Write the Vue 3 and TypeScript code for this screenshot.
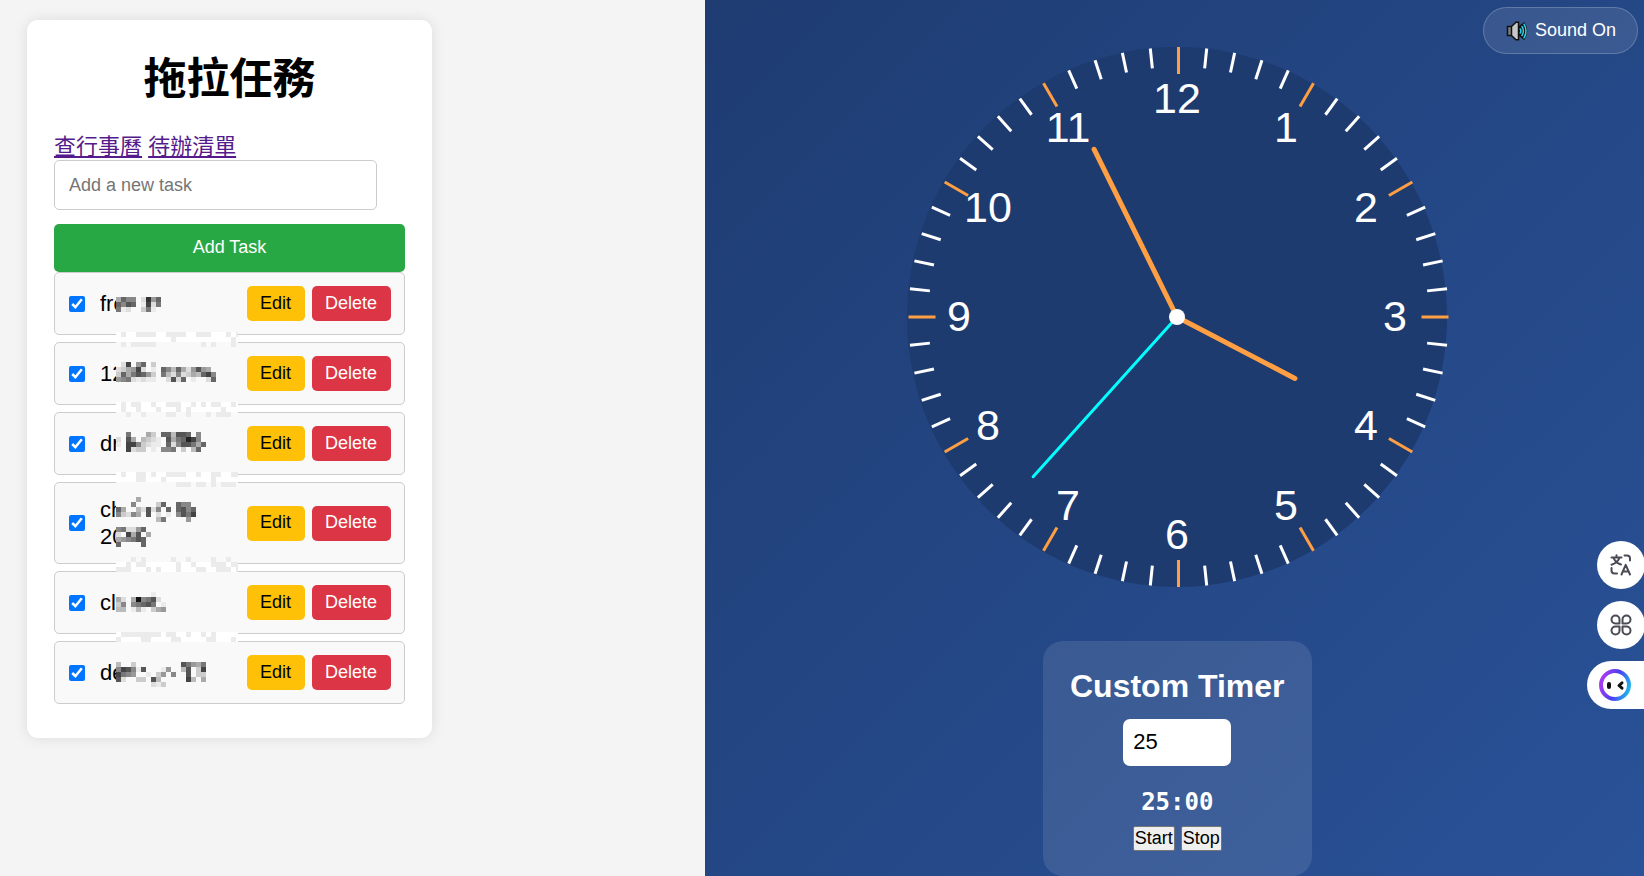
<script setup lang="ts">
import { computed, ref } from 'vue'

interface Task {
  id: number
  lines: string[]
  done: boolean
}

interface Cell {
  x: number
  y: number
  width: number
  fill: string
}

const tasks = ref<Task[]>([
  { id: 1, lines: ['fre'], done: true },
  { id: 2, lines: ['12'], done: true },
  { id: 3, lines: ['dr'], done: true },
  { id: 4, lines: ['ch', '20'], done: true },
  { id: 5, lines: ['cl'], done: true },
  { id: 6, lines: ['de'], done: true },
])
const newTask = ref('')

function addTask() {
  const text = newTask.value.trim()
  if (!text) return
  tasks.value.push({ id: Date.now(), lines: [text], done: false })
  newTask.value = ''
}

function editTask(task: Task) {
  newTask.value = task.lines.join(' ')
}

function removeTask(id: number) {
  tasks.value = tasks.value.filter((task) => task.id !== id)
}

// Pixelated privacy mask over the task names: one hex grey level per block,
// "." for the row colour, "w" for white.
const block = 5
const maskWidth = 122
const maskRows: Record<number, string> = {
  25: 'a688.d396................',
  30: '6856.e4d7................',
  35: '7ed..c7e.................',
  60: 'wewweeeewweeeewweeewwwewe',
  65: 'wwwwwwwwwwwewwwwwwwwwwwew',
  70: '.e.eeeee.........e.e...e.',
  90: '.d4.96.c.................',
  95: 'dca94d.e.68b6ad959a......',
  100: 'c6a7569c.7bd8dcab648.....',
  105: '987dedee..d5d6.e..d6.....',
  130: 'weweewwewweeewweweweewwew',
  135: 'wewwewwwewwwewewwwwwwewww',
  140: '..e..e....ee..e...e.eee..',
  160: '..7...ac.66b556.8........',
  165: 'd.5a.bcde.5a76248........',
  170: 'e.448cdee.6d8557a6.......',
  175: '..4dcc.e.887.c.b6........',
  200: 'wewweewewweeeewwewweewwee',
  205: 'wwwweewwwewwwwwwwwwewwwww',
  210: '............eee.ee.e.eee.',
  225: '....a....................',
  230: '...8....c6..688..........',
  235: '6a..bd5d8.6.6586.........',
  240: '8cd8a.5.d.e.8574.........',
  245: '........b7....9..........',
  255: '87dd96...................',
  260: 'd.4a5.a..................',
  265: 'a98756...................',
  270: '6....6...................',
  285: '...e.e.....e..e....e..e..',
  290: 'wweweewwwwwwewwewwweeewee',
  295: 'eeewwwewewwwewwweewweeewe',
  320: '.......e.................',
  325: 'ad.a1875d................',
  330: 'c8.87657.e...............',
  335: 'bb.ebe.ca9...............',
  360: 'weeeeeeeeweewwewwewewwwww',
  365: 'ewwwweewwwweewwwwweewwwew',
  390: 'b..c.........579a7.......',
  395: '8458e5...e9..b5.c4.......',
  400: '4789..e.c9.8..5.cc.......',
  405: '5d..cc.5b.....4b.a.......',
  410: '.......dec...............',
}

function shade(code: string): string {
  if (code === 'w') return '#ffffff'
  if (code === 'e') return '#ebebeb'
  if (code === '.') return '#f9f9f9'
  return '#' + code.repeat(3)
}

const maskCells = computed<Cell[]>(() =>
  Object.entries(maskRows).flatMap(([top, codes]) =>
    codes.split('').map((code, i) => ({
      x: i * block,
      y: Number(top),
      width: Math.min(block, maskWidth - i * block),
      fill: shade(code),
    })),
  ),
)

const soundOn = ref(true)

const time = { hours: 3, minutes: 55, seconds: 37 }
const hourAngle = computed(() => time.hours * 30 + time.minutes * 0.5)
const minuteAngle = computed(() => time.minutes * 6 + time.seconds * 0.1)
const secondAngle = computed(() => time.seconds * 6)

const ticks = Array.from({ length: 60 }, (_, i) => ({
  angle: i * 6,
  major: i % 5 === 0,
}))

const numerals = Array.from({ length: 12 }, (_, i) => {
  const value = i + 1
  const radians = (value * Math.PI) / 6
  return {
    value,
    x: Math.round(270 + 218 * Math.sin(radians)),
    y: Math.round(284 - 218 * Math.cos(radians)),
  }
})

const minutes = ref(25)
const remaining = ref(25 * 60)
let timer: number | undefined

const display = computed(() => {
  const m = String(Math.floor(remaining.value / 60)).padStart(2, '0')
  const s = String(remaining.value % 60).padStart(2, '0')
  return `${m}:${s}`
})

function stop() {
  window.clearInterval(timer)
}

function start() {
  stop()
  remaining.value = minutes.value * 60
  timer = window.setInterval(() => {
    if (remaining.value > 0) remaining.value -= 1
    else stop()
  }, 1000)
}
</script>

<template>
  <div class="page">
    <section class="left">
      <div class="card">
        <h1>拖拉任務</h1>
        <nav class="links">
          <a href="#calendar">查行事曆</a> <a href="#todo">待辦清單</a>
        </nav>
        <form @submit.prevent="addTask">
          <input
            v-model="newTask"
            class="new-task"
            type="text"
            placeholder="Add a new task"
            aria-label="Add a new task"
          />
          <button class="add" type="submit">Add Task</button>
        </form>
        <div class="list-wrap">
          <ul class="list">
            <li v-for="task in tasks" :key="task.id" class="item">
              <input :id="`task-${task.id}`" v-model="task.done" class="check" type="checkbox" />
              <label :for="`task-${task.id}`" class="name">
                <span v-for="line in task.lines" :key="line" class="line">{{ line }}</span>
              </label>
              <button class="btn edit" type="button" @click="editTask(task)">Edit</button>
              <button class="btn delete" type="button" @click="removeTask(task.id)">Delete</button>
            </li>
          </ul>
          <svg class="mask" width="122" height="430" shape-rendering="crispEdges" aria-hidden="true">
            <rect
              v-for="(cell, i) in maskCells"
              :key="i"
              :x="cell.x"
              :y="cell.y"
              :width="cell.width"
              height="5"
              :fill="cell.fill"
            />
          </svg>
        </div>
      </div>
    </section>

    <section class="right">
      <button class="sound" type="button" @click="soundOn = !soundOn">
        <svg width="22" height="20" viewBox="0 0 22 20" aria-hidden="true">
          <path d="M1.500 5.500h5v9h-5z" fill="#7d7d7d" stroke="#111" stroke-width="1.500" />
          <path d="M5.500 5.500 10 1.200h2.500v17.600H10L5.500 14.500z" fill="#c8c8c8" stroke="#111" stroke-width="1.500" />
          <path d="M13.500 5.500 18 2q5 8 0 16l-4.500-3.500z" fill="#111" stroke="#111" stroke-width="1.500" stroke-linejoin="round" />
          <g fill="none" stroke="#35cfe6" stroke-linecap="round" stroke-width="1.500">
            <path d="M14.300 8q1.200 2 0 4M16 5.500q2.800 4.500 0 9M18 3.200q4 6.800 0 13.600" />
          </g>
        </svg>
        <span>{{ soundOn ? 'Sound On' : 'Sound Off' }}</span>
      </button>

      <svg class="clock" viewBox="0 0 540 540" role="img" aria-label="Clock">
        <circle cx="270" cy="270" r="270" fill="#1e3b70" />
        <rect
          v-for="tick in ticks"
          :key="tick.angle"
          x="270"
          y="0"
          width="3"
          :height="tick.major ? 27 : 20"
          :fill="tick.major ? '#ff9f43' : '#ffffff'"
          :transform="`rotate(${tick.angle} 271.500 270)`"
        />
        <text
          v-for="n in numerals"
          :key="n.value"
          :x="n.x"
          :y="n.y"
          class="numeral"
          text-anchor="middle"
        >{{ n.value }}</text>
        <g stroke-linecap="round">
          <line x1="270" y1="270" x2="270" y2="137" stroke="#ff9f43" stroke-width="5" :transform="`rotate(${hourAngle} 270 270)`" />
          <line x1="270" y1="270" x2="270" y2="83" stroke="#ff9f43" stroke-width="5" :transform="`rotate(${minuteAngle} 270 270)`" />
          <line x1="270" y1="270" x2="270" y2="55" stroke="#00ffff" stroke-width="3" :transform="`rotate(${secondAngle} 270 270)`" />
        </g>
        <circle cx="270" cy="270" r="8" fill="#fff" />
      </svg>

      <div class="timer">
        <h2 id="timer-title">Custom Timer</h2>
        <input v-model.number="minutes" class="minutes" type="number" min="1" aria-labelledby="timer-title" />
        <div class="display">{{ display }}</div>
        <div class="controls">
          <button type="button" @click="start">Start</button>
          <button type="button" @click="stop">Stop</button>
        </div>
      </div>
    </section>

    <aside class="dock">
      <button class="round" type="button" aria-label="Translate">
        <svg width="22" height="22" viewBox="0 0 22 22" fill="none" stroke="#4b4b55" stroke-width="2" stroke-linecap="round" stroke-linejoin="round">
          <path d="M1.500 3.500h10M6.500 1.200v2.300M9.500 3.500C8.500 7 5.500 9.500 1.500 10.800M3.500 3.500C4.500 7 7.500 9.500 11 10.500" />
          <path d="M14.500 1.500h2.500a3 3 0 0 1 3 3v2M1.500 14v2.500a3 3 0 0 0 3 3h2.500" />
          <path d="M11.500 20.500 15.700 10.800 20 20.500M13 17.500h5.500" />
        </svg>
      </button>
      <button class="round" type="button" aria-label="Apps">
        <svg width="22" height="22" viewBox="0 0 22 22" fill="none" stroke="#4b4b55" stroke-width="2" stroke-linejoin="round">
          <path d="M9.500 9.500H5.500a4 4 0 1 1 4-4z" />
          <path d="M12.500 9.500h4a4 4 0 1 0-4-4z" />
          <path d="M9.500 12.500H5.500a4 4 0 1 0 4 4z" />
          <path d="M12.500 12.500h4a4 4 0 1 1-4 4z" />
        </svg>
      </button>
      <button class="assistant" type="button" aria-label="Assistant">
        <svg width="34" height="34" viewBox="0 0 34 34">
          <defs>
            <linearGradient id="ring" x1="0" y1="0.400" x2="1" y2="0.700">
              <stop offset="0" stop-color="#a63cf0" />
              <stop offset="0.500" stop-color="#4a3df5" />
              <stop offset="1" stop-color="#22b4e8" />
            </linearGradient>
          </defs>
          <circle cx="17" cy="17" r="14" fill="#fff" stroke="url(#ring)" stroke-width="4" />
          <rect x="9" y="14" width="4" height="7" rx="2" fill="#111" />
          <path d="M24 14.800 21 17.500l3 2.700" fill="none" stroke="#111" stroke-width="3" stroke-linecap="round" stroke-linejoin="round" />
        </svg>
      </button>
    </aside>
  </div>
</template>

<style>
body {
  margin: 0;
}
</style>

<style scoped>
.page {
  position: relative;
  display: grid;
  grid-template-columns: 3fr 4fr;
  min-height: 100vh;
  overflow: hidden;
  font-family: "Liberation Sans", Arial, "Noto Sans CJK TC", sans-serif;
  font-size: 22px;
}

button,
input {
  font-family: inherit;
  font-size: 18px;
}

.left {
  padding: 20px 27px;
  background: #f4f4f4;
}

.card {
  box-sizing: border-box;
  max-width: 405px;
  padding: 28px 27px 27px;
  border-radius: 11px;
  background: #fff;
  box-shadow: 0 0 14px rgba(0, 0, 0, 0.1);
}

h1 {
  margin: 0 0 23px;
  font-size: 43px;
  line-height: 62px;
  text-align: center;
}

.links {
  line-height: 27px;
}

.links a {
  color: #551a8b;
}

.new-task {
  display: block;
  box-sizing: border-box;
  width: 92%;
  height: 50px;
  margin-bottom: 14px;
  padding: 0 14px;
  border: 1px solid #ccc;
  border-radius: 5px;
}

.add {
  display: block;
  width: 100%;
  height: 48px;
  padding: 0 0 2px;
  border: 0;
  border-radius: 5px;
  background: #28a745;
  color: #fff;
}

.list-wrap {
  position: relative;
}

.list {
  margin: 0;
  padding: 0;
  list-style: none;
}

.item {
  display: flex;
  align-items: center;
  gap: 7px;
  margin-bottom: 7px;
  padding: 13px;
  border: 1px solid #ccc;
  border-radius: 5px;
  background: #f9f9f9;
}

.check {
  width: 16px;
  height: 16px;
  margin: 0 8px 0 1px;
}

.name {
  flex: 1;
  line-height: 27px;
}

.line {
  display: block;
}

.btn {
  height: 35px;
  padding: 0 14px 1px 13px;
  border: 0;
  border-radius: 5px;
}

.edit {
  background: #ffc107;
  color: #000;
}

.delete {
  background: #dc3545;
  color: #fff;
}

.mask {
  position: absolute;
  top: 0;
  left: 62px;
  pointer-events: none;
}

.right {
  position: relative;
  display: flex;
  flex-direction: column;
  align-items: center;
  gap: 54px;
  padding: 47px 0 0 6px;
  background: linear-gradient(135deg, #1e3c72, #2a5298);
  color: #fff;
}

.sound {
  position: absolute;
  top: 7px;
  right: 6px;
  display: flex;
  align-items: center;
  gap: 7px;
  height: 47px;
  padding: 0 21px 0 22px;
  border: 1px solid rgba(255, 255, 255, 0.2);
  border-radius: 24px;
  background: rgba(255, 255, 255, 0.1);
  color: #fff;
}

.clock {
  width: 540px;
  max-width: 100%;
  overflow: visible;
}

.numeral {
  fill: #fff;
  font-size: 43px;
}

.timer {
  display: flex;
  flex-direction: column;
  align-items: center;
  padding: 27px 27px 25px;
  border-radius: 20px;
  background: rgba(255, 255, 255, 0.1);
}

h2 {
  margin: 0 0 15px;
  font-size: 32px;
  line-height: 36px;
}

.minutes {
  box-sizing: border-box;
  width: 108px;
  height: 47px;
  padding: 0 10px 2px;
  border: 0;
  border-radius: 7px;
  background: #fff;
  font-size: 22px;
}

.display {
  margin: 20px 0 8px;
  font-family: "DejaVu Sans Mono", monospace;
  font-size: 24px;
  font-weight: bold;
  line-height: 32px;
}

.controls {
  display: flex;
  gap: 6px;
}

.controls button {
  height: 25px;
  padding: 0 1px;
  border: 1px solid #767676;
  border-radius: 2px;
  background: #efefef;
  color: #000;
}

.dock {
  position: absolute;
  top: 541px;
  right: 0;
  display: flex;
  flex-direction: column;
  align-items: flex-end;
  gap: 12px;
}

.dock button {
  display: flex;
  align-items: center;
  height: 48px;
  padding: 0;
  border: 0;
  background: #fff;
}

.dock .round {
  justify-content: center;
  width: 48px;
  margin-right: -1px;
  border-radius: 50%;
}

.dock .assistant {
  width: 57px;
  padding-left: 11px;
  border-radius: 24px 0 0 24px;
}
</style>
